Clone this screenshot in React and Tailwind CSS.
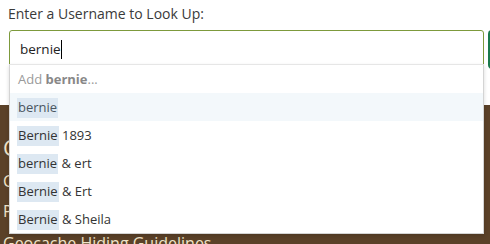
import React from 'react';

const suggestions = [
  { match: 'bernie', rest: '', active: true },
  { match: 'Bernie', rest: ' 1893' },
  { match: 'bernie', rest: ' & ert' },
  { match: 'Bernie', rest: ' & Ert' },
  { match: 'Bernie', rest: ' & Sheila' },
];

const App = () => {
  return (
    <div className="relative w-[490px] h-[244px] overflow-hidden bg-white font-['Open_Sans',sans-serif] text-[#333]">
      {/* Lookup form */}
      <div className="h-[105px] pt-[4px]">
        <label className="block pl-[8px] text-[14px] leading-[20px] text-[#3a3a3a]">
          Enter a Username to Look Up:
        </label>
        <div className="flex mt-[6px] pl-[9px] gap-[4px]">
          <div className="shrink-0 w-[475px] h-[39px] border border-[#7d9a3c] rounded-[3px] flex items-center pl-[10px] text-[13.5px] text-[#222]">
            bernie<span className="inline-block w-px h-[19px] bg-black"></span>
          </div>
          <div className="shrink-0 w-[20px] h-[39px] bg-[#1b7a4c] rounded-l-[4px]"></div>
        </div>
      </div>

      {/* Page content behind the menu */}
      <div className="bg-[#5b4128] text-[#efe3c8] h-[139px] pl-[3px] pt-[30px]">
        <h2 className="text-[22px] leading-[24px]">Cache Owner Tools</h2>
        <p className="text-[16px] leading-[20px] mt-[12px]">Cache Maintenance</p>
        <p className="text-[16px] leading-[20px] mt-[10px]">Publishing Process</p>
        <p className="text-[16px] leading-[20px] mt-[12px]">Geocache Hiding Guidelines</p>
      </div>

      {/* Autocomplete menu */}
      <div className="absolute left-[9px] top-[64px] w-[475px] bg-white border border-[#d4d4d4] border-t-[#e6e6e6] shadow-[0_2px_4px_rgba(0,0,0,0.15)]">
        <div className="h-[28px] flex items-center pt-[2px] pl-[8px] text-[13px] text-[#9a9a9a]">
          Add&nbsp;<b className="font-bold text-[#888]">bernie</b>...
        </div>
        {suggestions.map((s, i) => (
          <div
            key={i}
            className={`h-[28px] flex items-center pt-[2px] pl-[7px] text-[13px] ${s.active ? 'bg-[#f3f8fb] text-[#4a5560]' : 'text-[#333]'}`}
          >
            <span className="bg-[#dde8f2] px-[1px]">{s.match}</span>
            <span className="whitespace-pre">{s.rest}</span>
          </div>
        ))}
      </div>
    </div>
  );
};

export default App;
